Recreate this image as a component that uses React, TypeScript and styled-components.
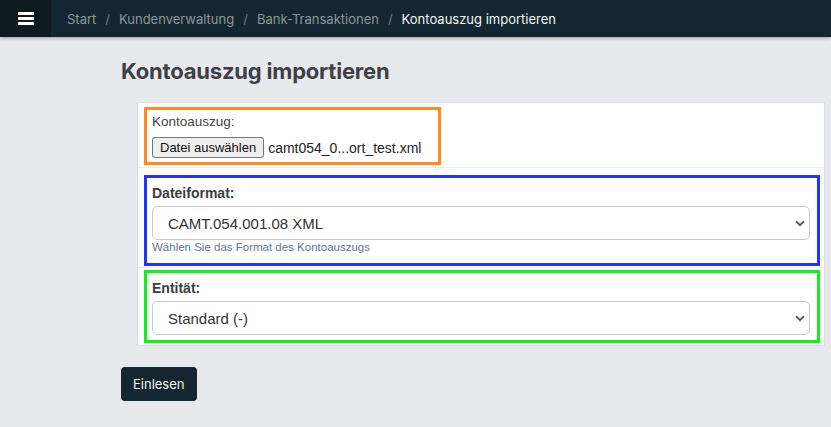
import React from "react";
import styled, { createGlobalStyle } from "styled-components";

const Global = createGlobalStyle`
  html, body { margin: 0; padding: 0; background: #e8e9ec; }
  body { font-family: "Liberation Sans", Arial, sans-serif; }
  * { box-sizing: border-box; }
`;

const Page = styled.div`
  min-height: 427px;
  background: #e8e9ec;
`;

const TopBar = styled.header`
  height: 37px;
  display: flex;
  align-items: stretch;
  background: #142730;
  box-shadow: 0 1px 4px rgba(0, 0, 0, 0.35);
  position: relative;
  z-index: 1;
`;

const MenuButton = styled.div`
  width: 51px;
  display: flex;
  align-items: center;
  justify-content: center;
  background: #0e1a1f;
`;

const Crumbs = styled.nav`
  display: flex;
  align-items: center;
  padding-left: 16px;
  font-family: Inter, "Liberation Sans", sans-serif;
  font-size: 13px;
`;

const Crumb = styled.span<{ $active?: boolean }>`
  color: ${(p) => (p.$active ? "#f3f5f6" : "#8a979d")};
`;

const Divider = styled.span`
  color: #6f7c82;
  padding: 0 9px;
`;

const Content = styled.main`
  padding: 20px 0 0 121px;
`;

const Title = styled.h1`
  margin: 0 0 17px;
  font-family: Inter, "Liberation Sans", sans-serif;
  font-weight: 700;
  font-size: 22px;
  line-height: 28px;
  color: #3f4046;
  letter-spacing: -0.2px;
`;

const Card = styled.div`
  margin-left: 16px;
  margin-right: 6px;
  background: #fff;
  border: 1px solid #dcdde0;
`;

const Row = styled.div<{ $pt: number; $pb: number }>`
  padding: ${(p) => p.$pt}px 4px ${(p) => p.$pb}px 6px;
  & + & {
    border-top: 1px solid #ebecee;
  }
`;

const Outline = styled.div<{ $color: string; $inline?: boolean }>`
  border: 3px solid ${(p) => p.$color};
  display: ${(p) => (p.$inline ? "inline-block" : "block")};
`;

const FileBox = styled.div`
  padding: 3px 17px 4px 5px;
  font-size: 13.5px;
  color: #444;
`;

const PlainLabel = styled.div`
  line-height: 18px;
  margin-bottom: 6px;
`;

const FileLine = styled.div`
  display: flex;
  align-items: center;
  gap: 4px;
`;

const FileButton = styled.button`
  height: 21px;
  padding: 0 7px;
  font-family: "Liberation Sans", Arial, sans-serif;
  font-size: 13px;
  color: #111;
  background: #efefef;
  border: 1px solid #767676;
  border-radius: 3px;
`;

const FileName = styled.span`
  font-size: 14px;
  color: #222;
`;

const FieldBox = styled.div<{ $pb: number }>`
  padding: 6px 7px ${(p) => p.$pb}px 5px;
`;

const FieldLabel = styled.label`
  display: block;
  font-weight: 700;
  font-size: 14px;
  line-height: 18px;
  color: #3c3d42;
  margin-bottom: 4px;
`;

const SelectWrap = styled.div`
  position: relative;
`;

const Select = styled.select`
  width: 100%;
  height: 34px;
  appearance: none;
  -webkit-appearance: none;
  padding: 0 30px 0 15px;
  font-family: "Liberation Sans", Arial, sans-serif;
  font-size: 15px;
  color: #333;
  background: #fff;
  border: 1px solid #c9c9cc;
  border-radius: 5px;
  outline: none;
`;

const Chevron = styled.svg`
  position: absolute;
  right: 5px;
  top: 14px;
  pointer-events: none;
`;

const Help = styled.div`
  margin: 1px 0 5px;
  font-size: 11.5px;
  line-height: 13px;
  color: #6b7480;
`;

const SubmitButton = styled.button`
  margin-top: 21px;
  height: 34px;
  padding: 0 12px;
  font-family: Inter, "Liberation Sans", sans-serif;
  font-size: 13px;
  color: #f0f2f3;
  background: #142730;
  border: none;
  border-radius: 4px;
`;

const Hamburger = () => (
  <svg width="16" height="13" viewBox="0 0 16 13">
    <rect x="0" y="0" width="16" height="3" rx="0.5" fill="#fff" />
    <rect x="0" y="5" width="16" height="3" rx="0.5" fill="#fff" />
    <rect x="0" y="10" width="16" height="3" rx="0.5" fill="#fff" />
  </svg>
);

const Down = () => (
  <Chevron width="10" height="7" viewBox="0 0 10 7">
    <path d="M1 1.2 L5 5.2 L9 1.2" fill="none" stroke="#555" strokeWidth="1.8" />
  </Chevron>
);

const SelectField = ({
  label,
  value,
  help,
  pb,
}: {
  label: string;
  value: string;
  help?: string;
  pb: number;
}) => (
  <FieldBox $pb={pb}>
    <FieldLabel>{label}</FieldLabel>
    <SelectWrap>
      <Select defaultValue={value}>
        <option>{value}</option>
      </Select>
      <Down />
    </SelectWrap>
    {help && <Help>{help}</Help>}
  </FieldBox>
);

export default function App() {
  return (
    <Page>
      <Global />
      <TopBar>
        <MenuButton>
          <Hamburger />
        </MenuButton>
        <Crumbs>
          <Crumb>Start</Crumb>
          <Divider>/</Divider>
          <Crumb>Kundenverwaltung</Crumb>
          <Divider>/</Divider>
          <Crumb>Bank-Transaktionen</Crumb>
          <Divider>/</Divider>
          <Crumb $active>Kontoauszug importieren</Crumb>
        </Crumbs>
      </TopBar>
      <Content>
        <Title>Kontoauszug importieren</Title>
        <Card>
          <Row $pt={4} $pb={2}>
            <Outline $color="#ff8a1e" $inline>
              <FileBox>
                <PlainLabel>Kontoauszug:</PlainLabel>
                <FileLine>
                  <FileButton>Datei auswählen</FileButton>
                  <FileName>camt054_0...ort_test.xml</FileName>
                </FileLine>
              </FileBox>
            </Outline>
          </Row>
          <Row $pt={7} $pb={1}>
            <Outline $color="#1f35ff">
              <SelectField
                label="Dateiformat:"
                value="CAMT.054.001.08 XML"
                help="Wählen Sie das Format des Kontoauszugs"
                pb={4}
              />
            </Outline>
          </Row>
          <Row $pt={2} $pb={2}>
            <Outline $color="#12f01a">
              <SelectField label="Entität:" value="Standard (-)" pb={5} />
            </Outline>
          </Row>
        </Card>
        <SubmitButton>Einlesen</SubmitButton>
      </Content>
    </Page>
  );
}
